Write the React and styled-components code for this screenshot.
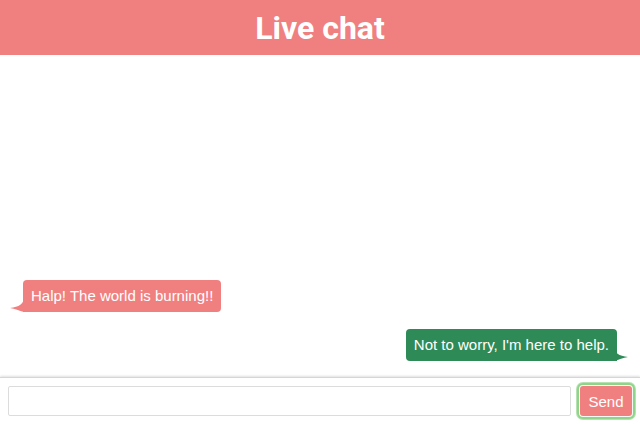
import React from 'react'
import styled, { createGlobalStyle } from 'styled-components'

const GlobalStyle = createGlobalStyle`
  html, body, #root {
    margin: 0;
    height: 100%;
  }
  body {
    font-family: "Liberation Sans", Arial, sans-serif;
    background: #fff;
  }
`

const Page = styled.div`
  display: flex;
  flex-direction: column;
  height: 100vh;
`

const Header = styled.header`
  flex: 0 0 55px;
  background: #f08080;
  display: flex;
  align-items: center;
  justify-content: center;
`

const Title = styled.h1`
  margin: 0;
  color: #fff;
  font-family: Roboto, "Liberation Sans", sans-serif;
  font-weight: 700;
  font-size: 32px;
  line-height: 1;
`

const Messages = styled.main`
  flex: 1;
  display: flex;
  flex-direction: column;
  justify-content: flex-end;
  gap: 17px;
  padding: 0 23px 16px 23px;
`

const Bubble = styled.div`
  position: relative;
  align-self: ${p => (p.mine ? 'flex-end' : 'flex-start')};
  background: ${p => (p.mine ? '#2e8b57' : '#f08080')};
  color: #fff;
  font-size: 15px;
  line-height: 18px;
  padding: 7px 8px;
  border-radius: 4px;
  ${p => (p.mine ? 'border-bottom-right-radius: 0;' : 'border-bottom-left-radius: 0;')}
`

const Tail = styled.svg`
  position: absolute;
  bottom: 0;
  ${p => (p.mine ? 'right: -11px; transform: scaleX(-1);' : 'left: -13px;')}
`

const Footer = styled.footer`
  flex: 0 0 47px;
  display: flex;
  align-items: center;
  gap: 9px;
  padding: 0 8px;
  box-sizing: border-box;
  border-top: 1px solid #d6d6d6;
  box-shadow: 0 -1px 2px rgba(0, 0, 0, 0.12);
`

const Input = styled.input`
  flex: 1;
  height: 30px;
  box-sizing: border-box;
  border: 1px solid #dcdcdc;
  border-radius: 2px;
  outline: none;
  font: inherit;
`

const SendButton = styled.button`
  height: 30px;
  width: 52px;
  border: none;
  border-radius: 3px;
  background: #f08080;
  color: #fff;
  font-family: "Liberation Sans", Arial, sans-serif;
  font-size: 15px;
  box-shadow: 0 0 0 1px #f5fbf4, 0 0 0 3px #8fd48a, 0 0 0 4px #b5e2b0;
  cursor: pointer;
`

const BubbleTail = ({ mine }) => (
  <Tail mine={mine} width="14" height="15" viewBox="0 0 14 15">
    <path
      d="M14 0 C14 7 9 10 0 11 C5 12 9 13.5 14 15 Z"
      fill={mine ? '#2e8b57' : '#f08080'}
    />
  </Tail>
)

const messages = [
  { text: 'Halp! The world is burning!!', mine: false },
  { text: "Not to worry, I'm here to help.", mine: true },
]

const App = () => (
  <>
    <GlobalStyle />
    <Page>
      <Header>
        <Title>Live chat</Title>
      </Header>
      <Messages>
        {messages.map((m, i) => (
          <Bubble key={i} mine={m.mine}>
            {m.text}
            <BubbleTail mine={m.mine} />
          </Bubble>
        ))}
      </Messages>
      <Footer>
        <Input type="text" />
        <SendButton>Send</SendButton>
      </Footer>
    </Page>
  </>
)

export default App
